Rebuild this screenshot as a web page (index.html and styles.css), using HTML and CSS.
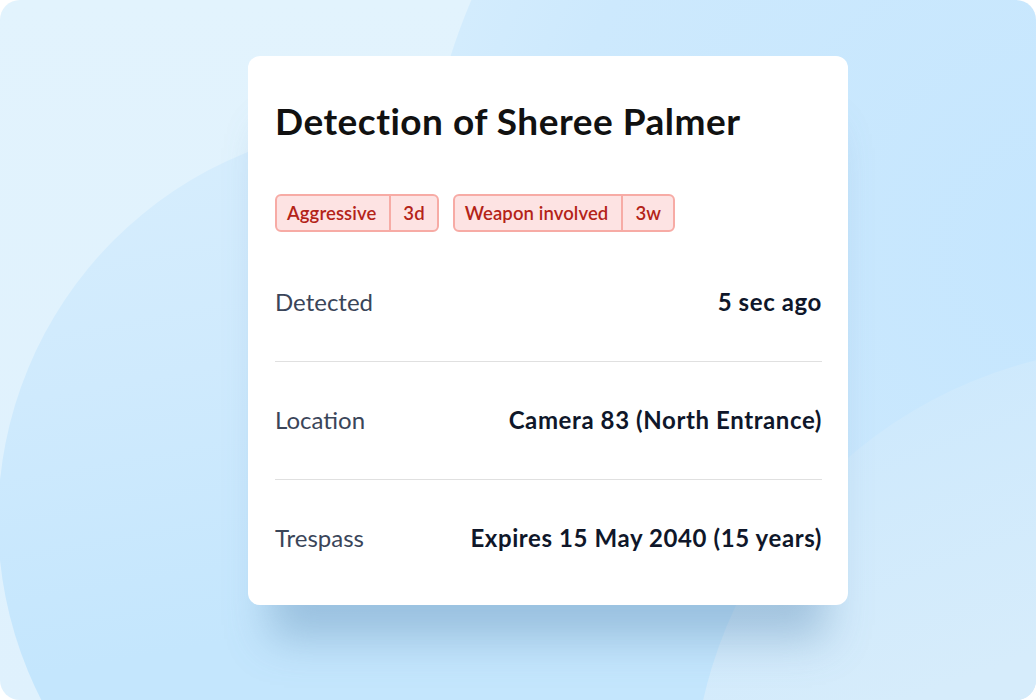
FILE: index.html
```html
<!DOCTYPE html>
<html lang="en">
<head>
<meta charset="utf-8">
<title>Detection of Sheree Palmer</title>
<link rel="stylesheet" href="styles.css">
</head>
<body>
<div class="stage">
  <section class="card">
    <h1 class="title">Detection of Sheree Palmer</h1>
    <div class="badges">
      <span class="badge"><span class="badge-label">Aggressive</span><span class="badge-age">3d</span></span>
      <span class="badge"><span class="badge-label">Weapon involved</span><span class="badge-age">3w</span></span>
    </div>
    <dl class="rows">
      <div class="row"><dt>Detected</dt><dd>5 sec ago</dd></div>
      <div class="row"><dt>Location</dt><dd>Camera 83 (North Entrance)</dd></div>
      <div class="row"><dt>Trespass</dt><dd>Expires 15 May 2040 (15 years)</dd></div>
    </dl>
  </section>
</div>
</body>
</html>
```

FILE: styles.css
```css
* { box-sizing: border-box; }
html, body { margin: 0; padding: 0; background: #ffffff; }
body { font-family: Lato, "Noto Sans", "Liberation Sans", sans-serif; }

.stage {
  position: relative;
  width: 1036px;
  height: 700px;
  border-radius: 20px;
  overflow: hidden;
  padding: 56px 0 0 248px;
  background:
    radial-gradient(circle 640px at 1060px 250px, #c5e6fe 0%, #cde9fd 80%, #d3ecfd 639px, transparent 640px),
    linear-gradient(180deg, #e2f3fd 0%, #dff1fd 100%);
  isolation: isolate;
}
.stage::before {
  content: "";
  position: absolute;
  z-index: -1;
  left: -2px;
  top: 124px;
  width: 792px;
  height: 792px;
  border-radius: 50%;
  background: linear-gradient(170deg, #d8eefd 0%, #cfeafd 30%, #c4e6fd 60%);
}
.stage::after {
  content: "";
  position: absolute;
  z-index: -1;
  left: 692px;
  top: 347px;
  width: 906px;
  height: 906px;
  border-radius: 50%;
  background: linear-gradient(160deg, #cbe8fd 0%, #d6ecfb 35%);
}

.card {
  width: 600px;
  height: 549px;
  background: #ffffff;
  border-radius: 12px;
  padding: 38px 26px 8px 27px;
  box-shadow: 0 56px 40px -22px rgba(95, 140, 180, 0.42);
}

.title {
  margin: 0;
  font-size: 37px;
  line-height: 54px;
  font-weight: 700;
  color: #111111;
  letter-spacing: 0.5px;
}

.badges {
  display: flex;
  gap: 14px;
  margin-top: 46px;
}
.badge {
  display: flex;
  height: 38px;
  border: 2px solid #f7aba5;
  background: #fde3e3;
  border-radius: 6px;
  color: #b42318;
  font-size: 18.5px;
  font-weight: 600;
  line-height: 34px;
  letter-spacing: 0.1px;
}
.badge-label { padding: 0 13px 0 10px; border-right: 2px solid #f7aba5; }
.badge-age { padding: 0 12px 0 12px; }

.rows { margin: 12px 0 0; padding: 0; }
.row {
  display: flex;
  justify-content: space-between;
  align-items: center;
  height: 118px;
  border-bottom: 1.5px solid #e0e0e0;
  font-size: 24px;
  line-height: 30px;
  padding-bottom: 2px;
}
.row:last-child { border-bottom: none; height: 116px; padding-bottom: 0; }
.row dt { color: #3a4559; font-weight: 400; }
.row dd { margin: 0; color: #0f172a; font-weight: 700; letter-spacing: 0.6px; }
```
